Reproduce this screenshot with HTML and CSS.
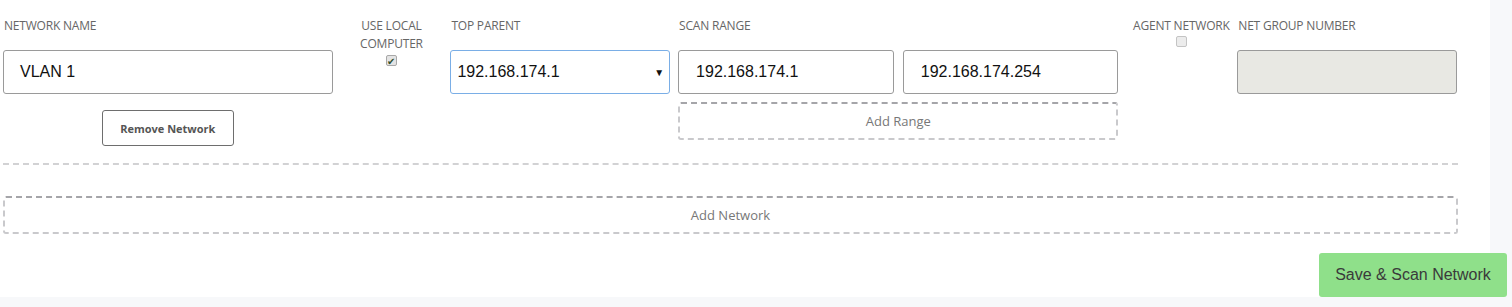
FILE: index.html
```html
<!DOCTYPE html>
<html lang="en">
<head>
    <meta charset="UTF-8">
    <title>Networks</title>
    <link rel="stylesheet" href="styles.css">
</head>
<body>
    <div id="panel">
        <div class="netRow">
            <div class="col colName">
                <p class="lbl">NETWORK NAME</p>
                <div class="field">VLAN 1</div>
                <button class="btnRemove" type="button">Remove Network</button>
            </div>
            <div class="col colLocal">
                <p class="lbl">USE LOCAL<br>COMPUTER</p>
                <span class="chk on">&#10004;</span>
            </div>
            <div class="col colParent">
                <p class="lbl">TOP PARENT</p>
                <div class="field sel">
                    <span>192.168.174.1</span>
                    <span class="arrow">&#9660;</span>
                </div>
            </div>
            <div class="col colScan">
                <p class="lbl">SCAN RANGE</p>
                <div class="pair">
                    <div class="field ip">192.168.174.1</div>
                    <div class="field ip">192.168.174.254</div>
                </div>
                <div class="dashBox rangeAdd">Add Range</div>
            </div>
            <div class="col colAgent">
                <p class="lbl">AGENT NETWORK</p>
                <span class="chk off"></span>
            </div>
            <div class="col colGroup">
                <p class="lbl">NET GROUP NUMBER</p>
                <div class="field ro"></div>
            </div>
        </div>
        <div class="sep"></div>
        <div class="dashBox netAdd">Add Network</div>
    </div>
    <button id="saveScan" type="button">Save &amp; Scan Network</button>
</body>
</html>
```

FILE: styles.css
```css
* {
    margin: 0;
    padding: 0;
    box-sizing: border-box;
}
body {
    background-color: #f7f8fa;
    font-family: "Open Sans", "Liberation Sans", sans-serif;
    height: 307px;
    overflow: hidden;
}
#panel {
    background-color: #fff;
    width: 1490px;
    height: 297px;
    padding: 17px 33px 0 3px;
}
.netRow {
    display: flex;
    align-items: flex-start;
}
.col {
    display: flex;
    flex-direction: column;
}
.lbl {
    font-size: 12px;
    line-height: 18px;
    letter-spacing: -0.2px;
    color: #666;
    white-space: nowrap;
}
.field {
    height: 44px;
    border: 1px solid #9a9a9a;
    border-radius: 3px;
    font-family: "Liberation Sans", Arial, sans-serif;
    font-size: 16px;
    color: #111;
    display: flex;
    align-items: center;
    padding-left: 16px;
}
.colName {
    width: 330px;
}
.colName .lbl,
.colParent .lbl,
.colScan .lbl,
.colGroup .lbl {
    margin-left: 1px;
    margin-bottom: 15px;
}
.btnRemove {
    align-self: center;
    margin-top: 16px;
    width: 132px;
    height: 36px;
    background: #fff;
    border: 1px solid #6e6e6e;
    border-radius: 3px;
    font-family: "Open Sans", sans-serif;
    font-weight: 700;
    font-size: 11px;
    color: #555;
}
.colLocal {
    width: 118px;
    align-items: center;
    text-align: center;
}
.colLocal .lbl {
    margin-bottom: 2px;
}
.chk {
    display: inline-flex;
    align-items: center;
    justify-content: center;
    width: 11px;
    height: 11px;
    border: 1px solid #a8a8a8;
    border-radius: 2px;
    background: #e4e4e4;
    font-size: 10px;
    line-height: 1;
    color: #2f4f2f;
}
.chk.off {
    background: #ececec;
    border-color: #c4c4c4;
}
.colParent {
    width: 220px;
}
.sel {
    border-color: #7aaee6;
    padding-left: 6px;
    padding-right: 5px;
    justify-content: space-between;
}
.arrow {
    font-size: 10px;
    color: #111;
}
.colScan {
    width: 441px;
    margin-left: 8px;
}
.pair {
    display: flex;
    gap: 9px;
}
.ip {
    flex: 1;
    padding-left: 17px;
}
.dashBox {
    border: 2px dashed #c9c9cc;
    border-top-color: #a5a5a9;
    border-radius: 3px;
    display: flex;
    align-items: center;
    justify-content: center;
    font-size: 13px;
    color: #777;
}
.rangeAdd {
    margin-top: 8px;
    height: 38px;
}
.colAgent {
    width: 119px;
    align-items: center;
    padding-left: 7px;
}
.colAgent .lbl {
    margin-bottom: 1px;
}
.colGroup {
    width: 220px;
}
.ro {
    background-color: #e8e8e3;
}
.sep {
    margin-top: 17px;
    width: 1455px;
    border-top: 2px dashed #d2d2d4;
}
.netAdd {
    margin-top: 31px;
    width: 1455px;
    height: 38px;
}
#saveScan {
    position: fixed;
    right: 5px;
    bottom: 10px;
    width: 188px;
    height: 44px;
    background-color: #8fe08a;
    border: none;
    border-radius: 3px;
    font-family: "Liberation Sans", Arial, sans-serif;
    font-size: 16px;
    color: #3a3a3a;
}
```
